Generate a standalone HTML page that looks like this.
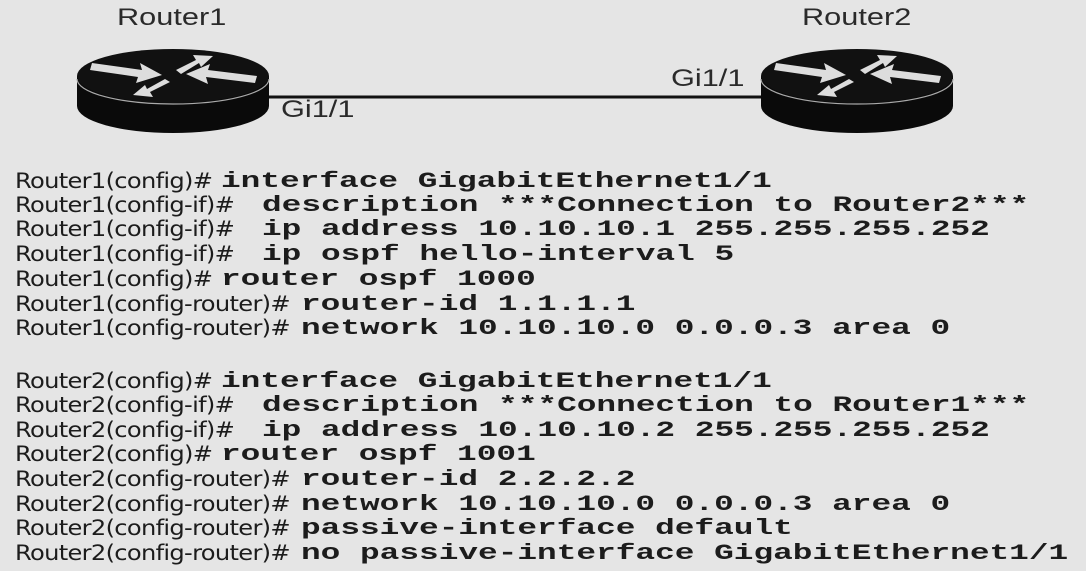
<!DOCTYPE html>
<html><head><meta charset="utf-8"><style>
html,body{margin:0;padding:0}
body{width:1086px;height:571px;background:#e5e5e5;position:relative;overflow:hidden;color:#1c1c1c}
.l{position:absolute;height:24px;line-height:24px;white-space:nowrap}
.p{position:absolute;left:15px;font:21px "DejaVu Sans",sans-serif;transform:scaleX(1.15);transform-origin:0 50%;display:inline-block;letter-spacing:-0.6px}
.c{position:absolute;font:bold 22px "Liberation Mono",monospace;transform:scaleX(1.49);transform-origin:0 50%;display:inline-block}
.a{left:221px}.b{left:262px}.r{left:301px}
.lab{position:absolute;font:24px "Liberation Sans",sans-serif;color:#2a2a2a;transform:scaleX(1.28);transform-origin:0 0}
</style></head><body>
<svg width="1086" height="150" style="position:absolute;left:0;top:0">
<line x1="265" y1="97" x2="765" y2="97" stroke="#111" stroke-width="3"/>
<g id="r1">
<path d="M77 76 L77 106 A96 27 0 0 0 269 106 L269 76 Z" fill="#0a0a0a"/>
<ellipse cx="173" cy="76" rx="96" ry="27" fill="#111"/>
<path d="M77 79 A96 25 0 0 0 269 79" fill="none" stroke="#aaa" stroke-width="1.2"/>
<polygon points="92,63 142,70 140,63 162,75 136,83 138,77 90,70" fill="#ddd"/>
<polygon points="176,70 196,60 193,55 213,56 201,67 199,63 181,74" fill="#ddd"/>
<polygon points="255,83 206,77 208,84 186,74 210,64 208,70 257,76" fill="#ddd"/>
<polygon points="170,82 150,92 153,97 133,95 145,85 147,89 165,79" fill="#ddd"/>
</g>
<g transform="translate(684,0)">
<path d="M77 76 L77 106 A96 27 0 0 0 269 106 L269 76 Z" fill="#0a0a0a"/>
<ellipse cx="173" cy="76" rx="96" ry="27" fill="#111"/>
<path d="M77 79 A96 25 0 0 0 269 79" fill="none" stroke="#aaa" stroke-width="1.2"/>
<polygon points="92,63 142,70 140,63 162,75 136,83 138,77 90,70" fill="#ddd"/>
<polygon points="176,70 196,60 193,55 213,56 201,67 199,63 181,74" fill="#ddd"/>
<polygon points="255,83 206,77 208,84 186,74 210,64 208,70 257,76" fill="#ddd"/>
<polygon points="170,82 150,92 153,97 133,95 145,85 147,89 165,79" fill="#ddd"/>
</g>
</svg>
<div class="lab" style="left:117px;top:4px">Router1</div>
<div class="lab" style="left:802px;top:4px">Router2</div>
<div class="lab" style="left:281px;top:96px">Gi1/1</div>
<div class="lab" style="left:671px;top:65px">Gi1/1</div>

<div class="l" style="top:169px"><span class="p">Router1(config)#</span><span class="c a">interface GigabitEthernet1/1</span></div>
<div class="l" style="top:193px"><span class="p">Router1(config-if)#</span><span class="c b">description ***Connection to Router2***</span></div>
<div class="l" style="top:217px"><span class="p">Router1(config-if)#</span><span class="c b">ip address 10.10.10.1 255.255.255.252</span></div>
<div class="l" style="top:242px"><span class="p">Router1(config-if)#</span><span class="c b">ip ospf hello-interval 5</span></div>
<div class="l" style="top:267px"><span class="p">Router1(config)#</span><span class="c a">router ospf 1000</span></div>
<div class="l" style="top:292px"><span class="p">Router1(config-router)#</span><span class="c r">router-id 1.1.1.1</span></div>
<div class="l" style="top:316px"><span class="p">Router1(config-router)#</span><span class="c r">network 10.10.10.0 0.0.0.3 area 0</span></div>

<div class="l" style="top:369px"><span class="p">Router2(config)#</span><span class="c a">interface GigabitEthernet1/1</span></div>
<div class="l" style="top:393px"><span class="p">Router2(config-if)#</span><span class="c b">description ***Connection to Router1***</span></div>
<div class="l" style="top:418px"><span class="p">Router2(config-if)#</span><span class="c b">ip address 10.10.10.2 255.255.255.252</span></div>
<div class="l" style="top:442px"><span class="p">Router2(config)#</span><span class="c a">router ospf 1001</span></div>
<div class="l" style="top:467px"><span class="p">Router2(config-router)#</span><span class="c r">router-id 2.2.2.2</span></div>
<div class="l" style="top:492px"><span class="p">Router2(config-router)#</span><span class="c r">network 10.10.10.0 0.0.0.3 area 0</span></div>
<div class="l" style="top:516px"><span class="p">Router2(config-router)#</span><span class="c r">passive-interface default</span></div>
<div class="l" style="top:541px"><span class="p">Router2(config-router)#</span><span class="c r">no passive-interface GigabitEthernet1/1</span></div>
</body></html>
